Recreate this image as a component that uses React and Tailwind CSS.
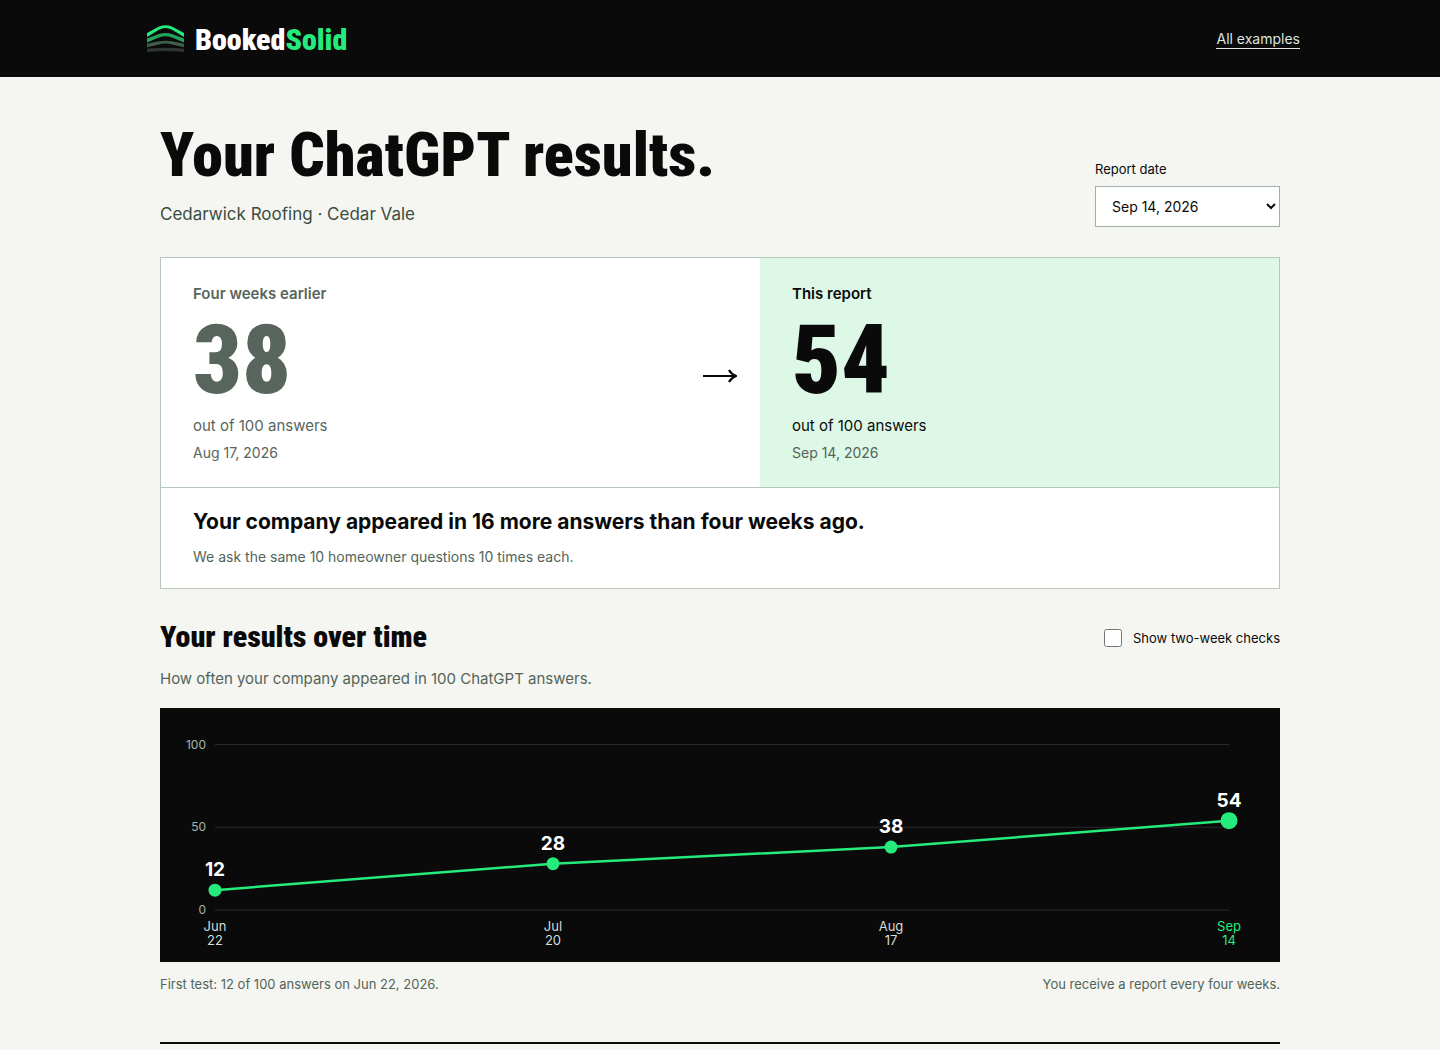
import { useState } from 'react'

const REPORTS = [
  { month: 'Jun', day: '22', value: 12 },
  { month: 'Jul', day: '20', value: 28 },
  { month: 'Aug', day: '17', value: 38 },
  { month: 'Sep', day: '14', value: 54 },
]

const xAt = (i) => 55 + i * 338
const yAt = (v) => 202 - v * 1.655

function Logo() {
  return (
    <a href="#" className="flex items-center gap-[11px]">
      <svg width="44" height="30" viewBox="0 0 44 30" aria-hidden="true">
        <path d="M7 8 L19 1.5 Q25.5 -1 32 1.5 L44 8 V12 L32 4.7 Q25.5 1.5 19 4.7 L7 12Z" fill="#25eb7c" />
        <path d="M7 13.5 L19 9 Q25.5 7 32 9 L44 13.5 V17.5 L32 12.5 Q25.5 9.9 19 12.5 L7 17.5Z" fill="#22a35b" />
        <path d="M7 18.7 L19 16.3 Q25.5 15 32 16.3 L44 18.7 V22.3 L32 19.4 Q25.5 17.8 19 19.4 L7 22.3Z" fill="#3d5f4b" />
        <path d="M7 23.7 Q25.5 22 44 23.7 V27 Q25.5 24.8 7 27Z" fill="#2f3632" />
      </svg>
      <span className="font-['Roboto_Condensed',Roboto,sans-serif] text-3xl leading-10 font-black text-white">
        Booked<span className="text-[#25eb7c]">Solid</span>
      </span>
    </a>
  )
}

function Arrow() {
  return (
    <svg width="34" height="16" viewBox="0 0 34 16" fill="none" stroke="#0a0a0a" aria-hidden="true">
      <path d="M0 8H32" strokeWidth="2" />
      <path d="M26 2Q28 6 33 8Q28 10 26 14" strokeWidth="2.2" />
    </svg>
  )
}

function ResultsChart() {
  return (
    <svg viewBox="0 0 1120 254" className="block w-full bg-[#0a0a0a]" role="img" aria-label="Results over time">
      {[100, 50, 0].map((tick) => (
        <g key={tick}>
          <line x1="55" x2="1069" y1={yAt(tick)} y2={yAt(tick)} stroke="#2a2a2a" />
          <text x="46" y={yAt(tick) + 4} textAnchor="end" fontSize="12" fill="#a9b8af">{tick}</text>
        </g>
      ))}
      <polyline
        points={REPORTS.map((r, i) => `${xAt(i)},${yAt(r.value)}`).join(' ')}
        fill="none"
        stroke="#25eb7c"
        strokeWidth="2.5"
      />
      {REPORTS.map((r, i) => {
        const current = i === REPORTS.length - 1
        return (
          <g key={r.month} textAnchor="middle">
            <circle cx={xAt(i)} cy={yAt(r.value)} r={current ? 8.5 : 6.5} fill="#25eb7c" />
            <text x={xAt(i)} y={yAt(r.value) - 14} fontSize="19" fontWeight="700" fill="#ffffff">{r.value}</text>
            <text fontSize="13" fill={current ? '#25eb7c' : '#d5ddd8'}>
              <tspan x={xAt(i)} y="223">{r.month}</tspan>
              <tspan x={xAt(i)} y="237">{r.day}</tspan>
            </text>
          </g>
        )
      })}
    </svg>
  )
}

export default function App() {
  const [date, setDate] = useState('Sep 14, 2026')
  const [showChecks, setShowChecks] = useState(false)

  return (
    <div className="min-h-screen bg-[#f5f6f1] font-[Inter,sans-serif] text-[#0a0a0a]">
      {/* Header */}
      <header className="bg-[#0a0a0a]">
        <div className="mx-auto flex h-[77px] max-w-[1160px] items-center justify-between pt-[3px]">
          <Logo />
          <a href="#" className="mb-0.5 border-b border-[#dde6e0] text-sm leading-[18px] text-[#dde6e0]">All examples</a>
        </div>
      </header>

      <main className="mx-auto max-w-[1120px] pt-[46px]">
        {/* Title and report picker */}
        <div className="flex items-end justify-between">
          <div>
            <h1 className="font-['Roboto_Condensed',Roboto,sans-serif] text-[62px] leading-16 font-black">Your ChatGPT results.</h1>
            <p className="mt-3.5 text-[17px] leading-[26px] text-[#3a4d42]">Cedarwick Roofing · Cedar Vale</p>
          </div>
          <div className="flex w-[185px] flex-col gap-[7px]">
            <label htmlFor="report-date" className="text-[13px] leading-5">Report date</label>
            <select
              id="report-date"
              value={date}
              onChange={(e) => setDate(e.target.value)}
              className="h-[41px] border border-[#9db0a3] bg-white pl-3 text-sm"
            >
              <option>Sep 14, 2026</option>
              <option>Aug 17, 2026</option>
              <option>Jul 20, 2026</option>
              <option>Jun 22, 2026</option>
            </select>
          </div>
        </div>

        {/* Comparison */}
        <section className="mt-[30px] border border-[#b8c7bd] bg-white">
          <div className="grid grid-cols-[1fr_80px_1fr]">
            <div className="px-8 pt-6 pb-[23px] text-[#57655c]">
              <h2 className="text-[15px] leading-6 font-semibold">Four weeks earlier</h2>
              <p className="mt-3 font-['Roboto_Condensed',Roboto,sans-serif] text-[96px] leading-[84px] font-black">38</p>
              <p className="mt-3 text-[15px] leading-6">out of 100 answers</p>
              <p className="mt-1 text-sm leading-[22px]">Aug 17, 2026</p>
            </div>
            <div className="flex items-center justify-center pt-1.5">
              <Arrow />
            </div>
            <div className="bg-[#def8e7] px-8 pt-6 pb-[23px]">
              <h2 className="text-[15px] leading-6 font-semibold">This report</h2>
              <p className="mt-3 font-['Roboto_Condensed',Roboto,sans-serif] text-[96px] leading-[84px] font-black">54</p>
              <p className="mt-3 text-[15px] leading-6">out of 100 answers</p>
              <p className="mt-1 text-sm leading-[22px] text-[#526459]">Sep 14, 2026</p>
            </div>
          </div>
          <div className="border-t border-[#b8c7bd] px-8 py-5">
            <p className="text-[21px] leading-7 font-bold">Your company appeared in 16 more answers than four weeks ago.</p>
            <p className="mt-2.5 text-sm leading-[22px] text-[#526459]">We ask the same 10 homeowner questions 10 times each.</p>
          </div>
        </section>

        {/* History */}
        <section className="mt-[30px]">
          <div className="flex items-end justify-between">
            <h2 className="font-['Roboto_Condensed',Roboto,sans-serif] text-3xl leading-9 font-black">Your results over time</h2>
            <label className="flex items-center gap-[11px] text-[13px] leading-[34px]">
              <input
                type="checkbox"
                checked={showChecks}
                onChange={(e) => setShowChecks(e.target.checked)}
                className="size-[18px]"
              />
              Show two-week checks
            </label>
          </div>
          <p className="mt-3 mb-[17px] text-[15px] leading-6 text-[#526459]">How often your company appeared in 100 ChatGPT answers.</p>
          <ResultsChart />
          <div className="mt-3 flex justify-between text-[13px] leading-5 text-[#526459]">
            <p>First test: 12 of 100 answers on Jun 22, 2026.</p>
            <p>You receive a report every four weeks.</p>
          </div>
        </section>

        <div className="mt-12 border-t-2 border-[#0a0a0a]" />
      </main>
    </div>
  )
}
